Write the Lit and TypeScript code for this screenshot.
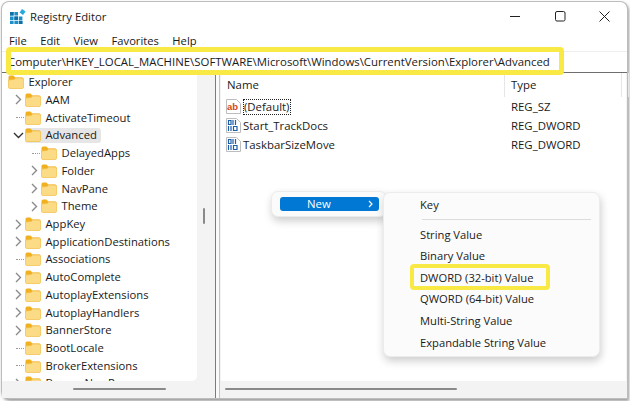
import { LitElement, css, html, svg } from 'lit';
import { customElement } from 'lit/decorators.js';

type TreeRow = {
  label: string;
  depth: number;
  arrow?: 'closed' | 'open' | 'none';
  selected?: boolean;
  root?: boolean;
};

const treeRows: TreeRow[] = [
  { label: 'Explorer', depth: 0, root: true },
  { label: 'AAM', depth: 1, arrow: 'closed' },
  { label: 'ActivateTimeout', depth: 1, arrow: 'none' },
  { label: 'Advanced', depth: 1, arrow: 'open', selected: true },
  { label: 'DelayedApps', depth: 2, arrow: 'none' },
  { label: 'Folder', depth: 2, arrow: 'closed' },
  { label: 'NavPane', depth: 2, arrow: 'closed' },
  { label: 'Theme', depth: 2, arrow: 'closed' },
  { label: 'AppKey', depth: 1, arrow: 'closed' },
  { label: 'ApplicationDestinations', depth: 1, arrow: 'closed' },
  { label: 'Associations', depth: 1, arrow: 'none' },
  { label: 'AutoComplete', depth: 1, arrow: 'closed' },
  { label: 'AutoplayExtensions', depth: 1, arrow: 'closed' },
  { label: 'AutoplayHandlers', depth: 1, arrow: 'closed' },
  { label: 'BannerStore', depth: 1, arrow: 'closed' },
  { label: 'BootLocale', depth: 1, arrow: 'none' },
  { label: 'BrokerExtensions', depth: 1, arrow: 'none' },
  { label: 'BrowseNewProcess', depth: 1, arrow: 'closed' },
];

const values = [
  { name: '(Default)', type: 'REG_SZ', kind: 'ab', focused: true },
  { name: 'Start_TrackDocs', type: 'REG_DWORD', kind: 'bin', focused: false },
  { name: 'TaskbarSizeMove', type: 'REG_DWORD', kind: 'bin', focused: false },
];

const newItems = [
  'String Value',
  'Binary Value',
  'DWORD (32-bit) Value',
  'QWORD (64-bit) Value',
  'Multi-String Value',
  'Expandable String Value',
];

const folderIcon = svg`
  <svg class="folder" width="16" height="14" viewBox="0 0 16 14">
    <path d="M.5 3.5V2A1.5 1.5 0 0 1 2 .5h3.4l2 2H14A1.5 1.5 0 0 1 15.5 4v1H.5z" fill="#f0b020"/>
    <path d="M.5 5l5.6-.6L7.5 3H14a1.5 1.5 0 0 1 1.5 1.5v7.6a1.4 1.4 0 0 1-1.4 1.4H1.9a1.4 1.4 0 0 1-1.4-1.4z" fill="#fbdb85" stroke="#f2bd45" stroke-width=".7"/>
  </svg>`;

const chevronRight = svg`
  <svg width="9" height="11" viewBox="0 0 9 11"><path d="M2 1l4.5 4.5L2 10" fill="none" stroke="#8a8a8a" stroke-width="1.4"/></svg>`;

const chevronDown = svg`
  <svg width="11" height="9" viewBox="0 0 11 9"><path d="M1 2l4.5 4.5L10 2" fill="none" stroke="#333" stroke-width="1.4"/></svg>`;

const appIcon = svg`
  <svg width="16" height="15" viewBox="0 0 16 15">
    <path d="M0 3h3.6v3.6H0zM4.4 3H8v3.6H4.4zM0 7.4h3.6V11H0zM4.4 7.4H8V11H4.4zM8.8 7.4h3.6V11H8.8zM0 11.8h3.6V15H0zM4.4 11.8H8V15H4.4zM8.8 11.8h3.6V15H8.8z" fill="#1a8fc8"/>
    <path d="M0 3h3.6v3.6H0zM4.4 7.4H8V11H4.4zM8.8 11.8h3.6V15H8.8z" fill="#0f6fa8"/>
    <path d="M12 0l3.6 2.6L13 6 9.6 3.4z" fill="#27a9e0"/>
  </svg>`;

const abIcon = svg`
  <svg width="15" height="15" viewBox="0 0 15 15">
    <path d="M.5.5h10l4 4v10H.5z" fill="#fff" stroke="#bdbdbd"/>
    <text x="1" y="10.5" font-family="Liberation Sans, sans-serif" font-size="9.5" font-weight="700" fill="#d8461a">ab</text>
  </svg>`;

const binIcon = svg`
  <svg width="15" height="15" viewBox="0 0 15 15">
    <path d="M.5.5h10l4 4v10H.5z" fill="#fff" stroke="#bdbdbd"/>
    <path d="M2.5 2.500h2.500v4H2.500zM7 2v5M9.500 2v5M2.500 8v5M5 8v5M7.500 8.500H11v4H7.500z" fill="none" stroke="#1f5fa8" stroke-width="1.2"/>
  </svg>`;

@customElement('app-root')
export class AppRoot extends LitElement {
  static styles = css`
    :host {
      display: block;
      position: relative;
      width: 630px;
      height: 401px;
      overflow: hidden;
      background: #fdfdfd;
      color: #1a1a1a;
      font: 11.4px/16px 'Open Sans', 'Noto Sans', sans-serif;
    }

    .window {
      display: flex;
      flex-direction: column;
      box-sizing: border-box;
      width: 625px;
      height: 396px;
      margin: 2px 0 0 2px;
      border-radius: 7px 7px 0 7px;
      background: #fff;
      box-shadow: 0 0 0 1px #bdbdbd, 1px 2px 3px 1px #9c9c9c;
    }

    .title {
      display: flex;
      align-items: center;
      height: 29px;
      padding: 0 0 0 8px;
      gap: 4px;
      flex: none;
    }

    .title-text {
      flex: 1;
      font-size: 11.3px;
    }

    .caption {
      display: flex;
      align-items: center;
      gap: 33.5px;
      padding-right: 17px;
    }

    .menu {
      display: flex;
      gap: 13.5px;
      height: 20px;
      align-items: center;
      padding-left: 7px;
      flex: none;
      font-size: 11.2px;
    }

    .address {
      display: flex;
      align-items: center;
      flex: none;
      height: 20px;
      white-space: nowrap;
      overflow: hidden;
      padding-left: 6px;
      border-top: 1px solid #efefef;
      border-bottom: 1px solid #6e6e6e;
    }

    .panes {
      flex: 1;
      min-height: 0;
      display: flex;
      background: #f3f3f3;
    }

    .left {
      flex: none;
      width: 213px;
      display: flex;
      flex-direction: column;
      position: relative;
    }

    .tree {
      flex: 1;
      min-height: 0;
      width: 195px;
      box-sizing: border-box;
      overflow: hidden;
      background: #fff;
      border-bottom-right-radius: 5px;
      padding-top: 0.4px;
      font-size: 11.25px;
    }

    .row {
      position: relative;
      display: flex;
      align-items: center;
      height: 17.72px;
      white-space: nowrap;
    }

    .arrow {
      display: flex;
      align-items: center;
      justify-content: center;
      flex: none;
      width: 11px;
      height: 100%;
      margin-left: -1px;
      margin-right: 1px;
    }

    .guide {
      width: 8px;
      align-self: center;
      flex: none;
      margin-left: 3px;
      border-top: 1px dotted #9a9a9a;
    }

    .cell {
      display: flex;
      align-items: center;
      gap: 4.5px;
      height: 15.5px;
      padding-right: 4px;
      border-radius: 3px;
    }

    .cell.selected {
      background: #e6e6e6;
    }

    .folder {
      flex: none;
    }

    .hbar {
      flex: none;
      height: 17px;
      position: relative;
    }

    .hbar.soft {
      background: #f3f3f3;
    }

    .thumb {
      height: 2px;
      background: #8a8a8a;
      border-radius: 1px;
      position: absolute;
      top: 7px;
    }

    .thumb.tree-thumb {
      left: 71px;
      width: 93px;
    }

    .thumb.list-thumb {
      left: 4px;
      width: 232px;
    }

    .vthumb {
      position: absolute;
      left: 201px;
      top: 135px;
      width: 2px;
      height: 16px;
      background: #8a8a8a;
      border-radius: 1px;
    }

    .split {
      flex: none;
      width: 5px;
      box-sizing: border-box;
      background: #fafafa;
      border-left: 1px solid #7c7c7c;
      border-right: 1px solid #c4c4c4;
    }

    .right {
      flex: 1;
      min-width: 0;
      display: flex;
      flex-direction: column;
      background: #fff;
      margin-left: 1px;
      border-right: 1px solid #f3f3f3;
    }

    .list {
      flex: 1;
      min-height: 0;
    }

    .head {
      display: grid;
      grid-template-columns: 284px 117px 1fr;
      height: 24px;
    }

    .head div {
      display: flex;
      align-items: center;
      padding-left: 6px;
      box-sizing: border-box;
      border-right: 1px solid #e6e6e6;
    }

    .value {
      display: grid;
      grid-template-columns: 284px 1fr;
      height: 19px;
      align-items: center;
    }

    .value-name {
      display: flex;
      align-items: center;
      gap: 2px;
      padding-left: 5px;
    }

    .value-name span.focused {
      outline: 1px dotted #222;
      outline-offset: -1px;
      padding: 0 2px 0 1px;
    }

    .value-type {
      padding-left: 6px;
    }

    .mark {
      position: absolute;
      box-sizing: border-box;
      border: 5px solid #f9e945;
      border-radius: 4px;
      pointer-events: none;
    }

    .mark.addr {
      left: 6px;
      top: 47px;
      width: 558px;
      height: 28px;
    }

    .mark.dword {
      left: 410px;
      top: 264px;
      width: 140px;
      height: 26px;
      border-width: 4px;
    }

    .popup {
      position: absolute;
      box-sizing: border-box;
      background: #fbfbfb;
      border: 1px solid #ececec;
      border-radius: 7px;
      box-shadow: 1px 4px 9px rgba(0, 0, 0, 0.2);
    }

    .popup.new {
      left: 271px;
      top: 191px;
      width: 116px;
      height: 26px;
      padding: 5px 7px 0 8px;
    }

    .new-item {
      display: flex;
      align-items: center;
      justify-content: space-between;
      height: 14px;
      padding: 0 5px 0 27px;
      color: #fff;
      background: #0078d4;
      border-radius: 3px;
    }

    .popup.sub {
      left: 383px;
      top: 192px;
      width: 217px;
      height: 165px;
      padding: 0.5px 0 0 36px;
      color: #1a1a1a;
      font-size: 11.2px;
    }

    .sub-item {
      height: 21.6px;
      line-height: 21.6px;
      white-space: nowrap;
    }

    .sep {
      height: 1px;
      margin: 4px 8px 3.5px 2px;
      background: #dcdcdc;
    }
  `;

  render() {
    return html`
      <div class="window">
        <div class="title">
          ${appIcon}
          <div class="title-text">Registry Editor</div>
          <div class="caption">
            <svg width="11" height="11" viewBox="0 0 11 11"><path d="M0 5.5h10" stroke="#222" stroke-width="1"/></svg>
            <svg width="11" height="11" viewBox="0 0 11 11"><rect x=".5" y=".5" width="9.5" height="9.5" rx="1.5" fill="none" stroke="#222"/></svg>
            <svg width="11" height="11" viewBox="0 0 11 11"><path d="M.5.5l10 10M10.5.5l-10 10" stroke="#222"/></svg>
          </div>
        </div>
        <div class="menu">
          <span>File</span><span>Edit</span><span>View</span><span>Favorites</span><span>Help</span>
        </div>
        <div class="address">Computer\\HKEY_LOCAL_MACHINE\\SOFTWARE\\Microsoft\\Windows\\CurrentVersion\\Explorer\\Advanced</div>
        <div class="panes">
          <div class="left">
            <div class="tree">${treeRows.map((row) => this.renderRow(row))}</div>
            <div class="hbar"><div class="thumb tree-thumb"></div></div>
            <div class="vthumb"></div>
          </div>
          <div class="split"></div>
          <div class="right">
            <div class="list">
              <div class="head"><div>Name</div><div>Type</div><div></div></div>
              ${values.map(
                (v) => html`
                  <div class="value">
                    <div class="value-name">
                      ${v.kind === 'ab' ? abIcon : binIcon}
                      <span class=${v.focused ? 'focused' : ''}>${v.name}</span>
                    </div>
                    <div class="value-type">${v.type}</div>
                  </div>
                `,
              )}
            </div>
            <div class="hbar soft"><div class="thumb list-thumb"></div></div>
          </div>
        </div>
      </div>
      <div class="mark addr"></div>
      <div class="popup new">
        <div class="new-item">
          <span>New</span>
          <svg width="6" height="8" viewBox="0 0 6 8"><path d="M1 1l3 3-3 3" fill="none" stroke="#fff" stroke-width="1.2"/></svg>
        </div>
      </div>
      <div class="popup sub">
        <div class="sub-item">Key</div>
        <div class="sep"></div>
        ${newItems.map((item) => html`<div class="sub-item">${item}</div>`)}
      </div>
      <div class="mark dword"></div>
    `;
  }

  renderRow(row: TreeRow) {
    const indent = row.root ? 6 : row.depth === 1 ? 12 : 28;
    const arrow =
      row.arrow === 'closed'
        ? chevronRight
        : row.arrow === 'open'
          ? chevronDown
          : row.arrow === 'none'
            ? html`<div class="guide"></div>`
            : null;
    return html`
      <div class="row" style="padding-left:${indent}px">
        ${row.arrow ? html`<div class="arrow">${arrow}</div>` : null}
        <div class="cell ${row.selected ? 'selected' : ''}">${folderIcon}<span>${row.label}</span></div>
      </div>
    `;
  }
}
